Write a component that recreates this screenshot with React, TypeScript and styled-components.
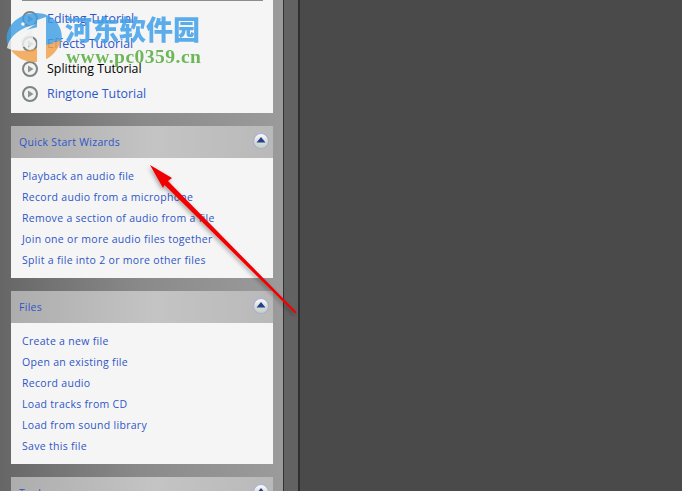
import React from "react";
import styled, { createGlobalStyle } from "styled-components";

const Global = createGlobalStyle`
  html, body { margin: 0; padding: 0; width: 682px; height: 491px; overflow: hidden; background: #4a4a4a; }
`;
const Page = styled.div`
  position: relative; display: flex; width: 682px; height: 491px; overflow: hidden;
  font-family: "Open Sans", "Noto Sans", sans-serif;
`;
const Sidebar = styled.aside`
  width: 283px; flex: none; box-sizing: border-box; padding: 0 10px 0 11px;
  display: flex; flex-direction: column; gap: 13px; overflow: hidden;
  background: linear-gradient(90deg, #666 0, #8a8a8a 50%, #9b9b9b 100%);
`;
const Splitter = styled.div`
  width: 14px; flex: none; background: #626262;
  border-left: 1px solid #333; border-right: 2px solid #2f2f2f;
`;
const Workspace = styled.main`flex: 1; background: #4a4a4a;`;
const Panel = styled.section`flex: none;`;
const Header = styled.div`
  height: 32px; display: flex; align-items: center; justify-content: space-between;
  padding: 0 3px 0 8px; box-sizing: border-box;
  background: linear-gradient(90deg, #adadad 0, #c4c4c4 55%, #b9b9b9 100%);
`;
const Title = styled.span`font-size: 10.5px; color: #2f55c8; letter-spacing: .3px;`;
const CollapseSlot = styled.span`display: flex; margin-top: -3px;`;
const Body = styled.div<{ $top?: number }>`
  background: #f5f5f5; padding: ${p => p.$top ?? 8}px 0 7px;
`;
const TopRule = styled.div`height: 1px; margin: 0 10px 5px 11px; background: #8c8c8c;`;
const TutorialRow = styled.div`
  height: 25px; display: flex; align-items: center; gap: 9px; padding-left: 22px; margin-left: -11px;
`;
const TutorialText = styled.span<{ $hot?: boolean }>`
  font-size: 12.4px; color: ${p => (p.$hot ? "#000" : "#2f55c8")};
`;
const Wizard = styled.div`
  height: 21px; line-height: 21px; padding-left: 11px; font-size: 10.5px;
  color: #2f55c8; letter-spacing: .3px; white-space: nowrap;
`;
const Overlay = styled.svg`position: absolute; left: 0; top: 0; pointer-events: none;`;
const WatermarkName = styled.div`
  position: absolute; left: 65px; top: 13px; font-family: "Noto Sans CJK SC", sans-serif;
  font-weight: 900; font-size: 27px; line-height: 32px; color: #3fa0ea; opacity: .85;
  white-space: nowrap;
`;
const WatermarkUrl = styled.div`
  position: absolute; left: 66px; top: 46px; font-family: "Liberation Serif", serif;
  font-weight: 700; font-size: 19.5px; line-height: 22px; color: #5fb04a; opacity: .9; letter-spacing: .5px;
  white-space: nowrap;
`;

const PlayIcon = () => (
  <svg width="16" height="16" viewBox="0 0 16 16">
    <circle cx="8" cy="8" r="7" fill="#f2f2f2" stroke="#7c8484" strokeWidth="2" />
    <path d="M6 4.5 L11.5 8 L6 11.5 Z" fill="#8d9494" />
  </svg>
);
const Collapse = () => (
  <svg width="18" height="18" viewBox="0 0 18 18">
    <defs>
      <linearGradient id="cg" x1="0" y1="0" x2="0" y2="1">
        <stop offset="0" stopColor="#fdfdfd" />
        <stop offset=".55" stopColor="#d9dcd9" />
        <stop offset="1" stopColor="#c4d0c4" />
      </linearGradient>
    </defs>
    <circle cx="9" cy="9" r="7.5" fill="url(#cg)" stroke="#a9b0d0" strokeWidth="1.2" />
    <path d="M9 5 L13.5 10.5 H4.5 Z" fill="#22408e" />
  </svg>
);

const tutorials = ["Editing Tutorial", "Effects Tutorial", "Splitting Tutorial", "Ringtone Tutorial"];
const wizards = ["Playback an audio file", "Record audio from a microphone", "Remove a section of audio from a file", "Join one or more audio files together", "Split a file into 2 or more other files"];
const files = ["Create a new file", "Open an existing file", "Record audio", "Load tracks from CD", "Load from sound library", "Save this file"];

export default function App() {
  return (
    <Page>
      <Global />
      <Sidebar>
        <Panel>
          <Body $top={0}>
            <TopRule />
            {tutorials.map((t, i) => (
              <TutorialRow key={t}><PlayIcon /><TutorialText $hot={i === 2}>{t}</TutorialText></TutorialRow>
            ))}
          </Body>
        </Panel>
        <Panel>
          <Header><Title>Quick Start Wizards</Title><CollapseSlot><Collapse /></CollapseSlot></Header>
          <Body>{wizards.map(w => <Wizard key={w}>{w}</Wizard>)}</Body>
        </Panel>
        <Panel>
          <Header><Title>Files</Title><CollapseSlot><Collapse /></CollapseSlot></Header>
          <Body>{files.map(w => <Wizard key={w}>{w}</Wizard>)}</Body>
        </Panel>
        <Panel>
          <Header><Title>Tools</Title><CollapseSlot><Collapse /></CollapseSlot></Header>
        </Panel>
      </Sidebar>
      <Splitter />
      <Workspace />
      <Overlay width="682" height="491" viewBox="0 0 682 491">
        <defs>
          <filter id="sh" x="-20%" y="-20%" width="140%" height="140%">
            <feDropShadow dx="-1" dy="2" stdDeviation="2" floodColor="#000" floodOpacity=".35" />
          </filter>
        </defs>
        <path d="M150 165 L172 178 L168 181 L296.5 312 Q296 314 294.5 313 L164.5 185 L163 188 Z" fill="#f00000" filter="url(#sh)" />
        <g opacity=".82">
          <path d="M8 46 C2 28 18 13 36 13 C54 13 65 28 61 43 L46 48 L42 26 L26 30 L10 44 Z" fill="#3f9fe4" />
          <path d="M11 50 C24 52 36 50 46 45 L61 40 C58 52 48 62 34 62 C24 62 16 57 11 50 Z" fill="#f2a048" />
          <path d="M7 48 C9 36 20 28 36 24 C24 31 16 38 12 50 Z" fill="#f4f4f4" />
          <path d="M20 40 L32 29 L34 46 L22 47 Z" fill="#f0f0f0" />
          <path d="M37 20 L46 17 L46 62 L37 62 Z" fill="#f4f4f4" />
          <circle cx="23" cy="24" r="1.8" fill="#fff" />
        </g>
      </Overlay>
      <WatermarkName>河东软件园</WatermarkName>
      <WatermarkUrl>www.pc0359.cn</WatermarkUrl>
    </Page>
  );
}
